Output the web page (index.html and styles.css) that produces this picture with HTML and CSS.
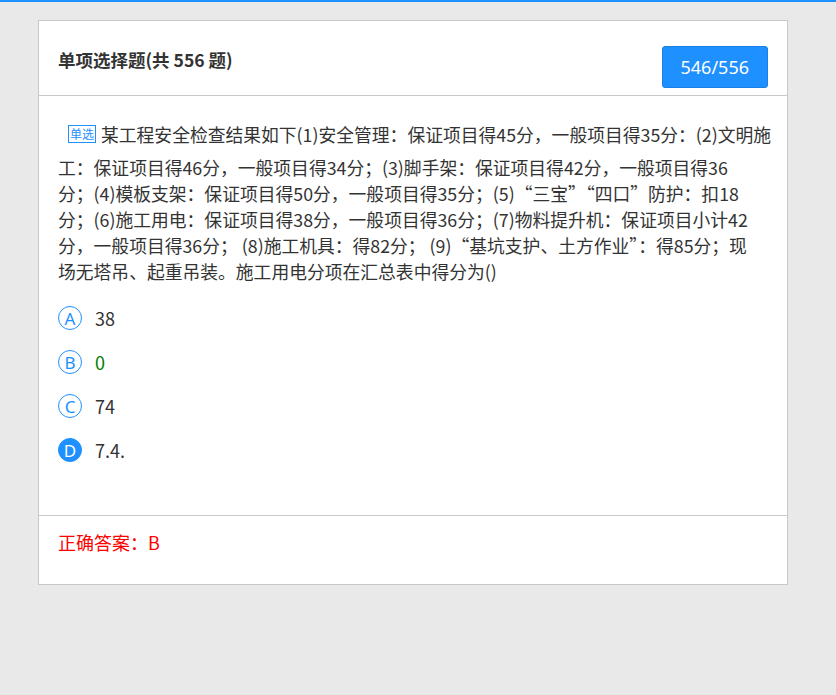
FILE: index.html
```html
<!DOCTYPE html>
<html lang="zh-CN">
<head>
<meta charset="utf-8">
<title>单项选择题</title>
<link rel="stylesheet" href="styles.css">
</head>
<body>
<div class="card">
  <div class="card-header">
    <h2 class="title">单项选择题(共 556 题)</h2>
    <button class="counter" type="button">546/556</button>
  </div>
  <div class="card-body">
    <p class="question"><span class="tag">单选</span>某工程安全检查结果如下(1)安全管理：保证项目得45分，一般项目得35分：(2)文明施<br>工：保证项目得46分，一般项目得34分；(3)脚手架：保证项目得42分，一般项目得36<br>分；(4)模板支架：保证项目得50分，一般项目得35分；(5)“三宝”“四口”防护：扣18<br>分；(6)施工用电：保证项目得38分，一般项目得36分；(7)物料提升机：保证项目小计42<br>分，一般项目得36分； (8)施工机具：得82分； (9)“基坑支护、土方作业”：得85分；现<br>场无塔吊、起重吊装。施工用电分项在汇总表中得分为()</p>
    <ul class="options">
      <li class="option"><span class="letter">A</span><span class="option-text">38</span></li>
      <li class="option"><span class="letter">B</span><span class="option-text correct">0</span></li>
      <li class="option"><span class="letter">C</span><span class="option-text">74</span></li>
      <li class="option selected"><span class="letter">D</span><span class="option-text">7.4.</span></li>
    </ul>
  </div>
  <div class="card-footer">正确答案：B</div>
</div>
</body>
</html>
```
FILE: styles.css
```css
html {
  background: #e8e9e8;
}

body {
  margin: 0;
  min-height: 100vh;
  box-sizing: border-box;
  border-top: 2px solid #1e90ff;
  padding: 18px 0 0 38px;
  background: #e8e9e8;
  font-family: "Noto Sans CJK SC", "Noto Sans", sans-serif;
  color: #333;
}

.card {
  width: 750px;
  box-sizing: border-box;
  background: #fff;
  border: 1px solid #c8c8c8;
}

.card-header {
  display: flex;
  justify-content: space-between;
  align-items: flex-start;
  padding: 25px 19px 7px;
  border-bottom: 1px solid #c8c8c8;
}

.title {
  margin: 0;
  font-size: 17.5px;
  line-height: 28px;
  font-weight: 700;
  color: #333;
}

.counter {
  height: 42px;
  padding: 0 18px;
  background: #1e90ff;
  border: 1px solid #1a80e6;
  border-radius: 3px;
  color: #fff;
  font-family: "Noto Sans", "Noto Sans CJK SC", sans-serif;
  font-size: 18px;
  line-height: 40px;
}

.card-body {
  padding: 25px 10px 43px 19px;
}

.question {
  margin: 0;
  font-size: 17.8px;
  line-height: 26px;
  white-space: nowrap;
  color: #333;
}

.tag {
  display: inline-block;
  vertical-align: 3px;
  margin: 0 5px 11px 10px;
  padding: 0 1px;
  border: 1px solid #1e90ff;
  color: #1e90ff;
  font-size: 12px;
  line-height: 16px;
}

.options {
  list-style: none;
  margin: 12px 0 0;
  padding: 0;
}

.option {
  display: flex;
  align-items: center;
  height: 44px;
}

.letter {
  display: flex;
  align-items: center;
  justify-content: center;
  width: 24px;
  height: 24px;
  box-sizing: border-box;
  margin-right: 13px;
  border: 1px solid #1e90ff;
  border-radius: 50%;
  color: #1e90ff;
  font-family: "Noto Sans", sans-serif;
  font-size: 17px;
  line-height: 1;
}

.selected .letter {
  background: #1e90ff;
  color: #fff;
}

.option-text {
  font-size: 18px;
  line-height: 26px;
  color: #333;
}

.option-text.correct {
  color: #008000;
}

.card-footer {
  padding: 13px 19px 29px;
  border-top: 1px solid #c8c8c8;
  font-size: 18px;
  line-height: 26px;
  color: #f00;
}
```
